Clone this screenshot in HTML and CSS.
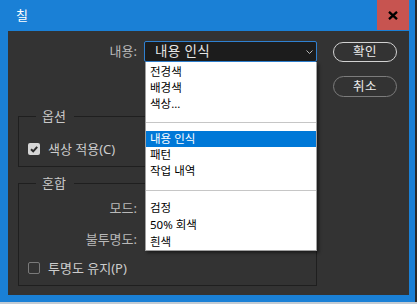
FILE: index.html
```html
<!DOCTYPE html>
<html lang="ko">
<head>
<meta charset="utf-8">
<title>칠</title>
<link rel="stylesheet" href="styles.css">
</head>
<body>
<div class="window">
  <div class="titlebar">
    <span class="title">칠</span>
    <button class="close" aria-label="닫기">
      <svg width="10" height="9" viewBox="0 0 10 9"><path d="M1 0.8 L9 8.2 M9 0.8 L1 8.2" stroke="#000" stroke-width="2.3" fill="none"/></svg>
    </button>
  </div>
  <div class="panel">
    <div class="main">
      <div class="row top-row">
        <span class="label">내용:</span>
        <div class="select-wrap">
          <div class="select">
            <span class="select-text">내용 인식</span>
            <svg class="chev" width="7" height="4" viewBox="0 0 7 4"><path d="M0.5 0.5 L3.5 3.5 L6.5 0.5" stroke="#b8b8b8" stroke-width="1" fill="none"/></svg>
          </div>
          <ul class="menu">
            <li>전경색</li>
            <li>배경색</li>
            <li>색상...</li>
            <li class="sep"></li>
            <li class="active">내용 인식</li>
            <li>패턴</li>
            <li>작업 내역</li>
            <li class="sep sep2"></li>
            <li class="tall">검정</li>
            <li class="tall">50% 회색</li>
            <li class="tall">흰색</li>
          </ul>
        </div>
      </div>
      <fieldset class="group options">
        <legend>옵션</legend>
        <div class="check-row">
          <span class="box checked"><svg width="12" height="12" viewBox="0 0 12 12"><path d="M3 6.2 L5.2 8.3 L9.2 3.8" stroke="#2b2b2b" stroke-width="2" fill="none"/></svg></span>
          <span>색상 적용(C)</span>
        </div>
      </fieldset>
      <fieldset class="group blend">
        <legend>혼합</legend>
        <div class="row field-row"><span class="label">모드:</span></div>
        <div class="row field-row"><span class="label">불투명도:</span></div>
        <div class="check-row">
          <span class="box"></span>
          <span>투명도 유지(P)</span>
        </div>
      </fieldset>
    </div>
    <div class="buttons">
      <button class="btn primary">확인</button>
      <button class="btn secondary">취소</button>
    </div>
  </div>
</div>
</body>
</html>
```

FILE: styles.css
```css
* { box-sizing: border-box; }
html, body { margin: 0; padding: 0; }
body {
  width: 417px;
  height: 304px;
  overflow: hidden;
  background: #c3cbd3;
  font-family: "Noto Sans", "Noto Sans CJK KR", sans-serif;
}
.window {
  width: 417px;
  height: 302px;
  background: #1a80d6;
  border-right: 2px solid #2a2a2a;
  display: flex;
  flex-direction: column;
}
.titlebar {
  height: 31px;
  display: flex;
  align-items: flex-start;
  flex: none;
}
.title {
  margin: 7px 0 0 16px;
  font-size: 13px;
  line-height: 17px;
  color: #fff;
}
.close {
  margin-left: auto;
  margin-right: 6px;
  width: 32px;
  height: 30px;
  padding: 0;
  border: 0;
  background: #c75450;
  display: flex;
  align-items: center;
  justify-content: center;
}
.panel {
  margin: 0 6px 7px 8px;
  height: 264px;
  background: #333333;
  padding: 10px 0 0 10px;
  display: grid;
  grid-template-columns: 299px 64px;
  column-gap: 16px;
  align-items: start;
}
.row {
  display: flex;
  align-items: center;
  height: 21px;
}
.label {
  font-size: 13px;
  line-height: 17px;
  color: #b9b9b9;
  text-align: right;
}
.top-row .label {
  width: 119px;
  margin-right: 7px;
}
.select-wrap {
  position: relative;
  width: 173px;
  height: 21px;
}
.select {
  height: 21px;
  background: #1c1c1c;
  border: 1px solid #2f80d0;
  border-radius: 2px;
  display: flex;
  align-items: center;
  padding-left: 10px;
}
.select-text {
  font-size: 13.5px;
  line-height: 17px;
  color: #e6e6e6;
  letter-spacing: 0.4px;
}
.chev {
  margin-left: auto;
  margin-right: 3px;
}
.menu {
  position: absolute;
  left: 1px;
  top: 21px;
  width: 172px;
  margin: 0;
  padding: 2px 0 0;
  list-style: none;
  background: #ffffff;
  border: 1px solid #a0a0a0;
  border-top: 0;
  box-shadow: 2px 2px 3px rgba(0, 0, 0, 0.45);
  font-size: 11.5px;
  color: #000;
  z-index: 2;
}
.menu li {
  height: 16px;
  line-height: 16px;
  padding-left: 4px;
  white-space: nowrap;
}
.menu li.tall {
  height: 17px;
  line-height: 17px;
}
.menu li.active {
  background: #0078d7;
  color: #fff;
}
.menu li.sep {
  height: 19px;
  padding: 10px 0 0;
}
.menu li.sep2 {
  height: 20px;
  padding-top: 11px;
}
.menu li.sep::before {
  content: "";
  display: block;
  height: 1px;
  background: #c6c6c6;
}
.group {
  margin: 0;
  min-width: 0;
  padding: 16px 9px 9px 9px;
  border: 1px solid #1f1f1f;
}
.group legend {
  margin-left: 8px;
  padding: 0 8px 0 6px;
  font-size: 13px;
  line-height: 17px;
  color: #c8c8c8;
}
.options {
  margin-top: 46px;
}
.blend {
  margin-top: 8px;
  padding-top: 6px;
}
.field-row .label {
  width: 109px;
}
.field-row + .field-row {
  margin-top: 10px;
}
.blend .check-row {
  margin-top: 10px;
}
.check-row {
  display: flex;
  align-items: center;
  gap: 8px;
  height: 16px;
  font-size: 13px;
  line-height: 17px;
  color: #cdcdcd;
}
.box {
  width: 12px;
  height: 12px;
  border-radius: 2px;
  border: 1px solid #7a7a7a;
  flex: none;
  display: flex;
}
.box.checked {
  background: #d6d6d6;
  border: 0;
}
.buttons {
  display: flex;
  flex-direction: column;
  gap: 14px;
  padding-top: 1px;
}
.btn {
  width: 64px;
  height: 20px;
  padding: 0;
  border-radius: 11px;
  background: transparent;
  font-family: "Noto Sans", "Noto Sans CJK KR", sans-serif;
  font-size: 12.5px;
  line-height: 16px;
  color: #ececec;
  letter-spacing: 0.5px;
}
.btn.primary {
  border: 1.5px solid #d2d2d2;
}
.btn.secondary {
  height: 21px;
  border: 1.5px solid #7c7c7c;
}
```
